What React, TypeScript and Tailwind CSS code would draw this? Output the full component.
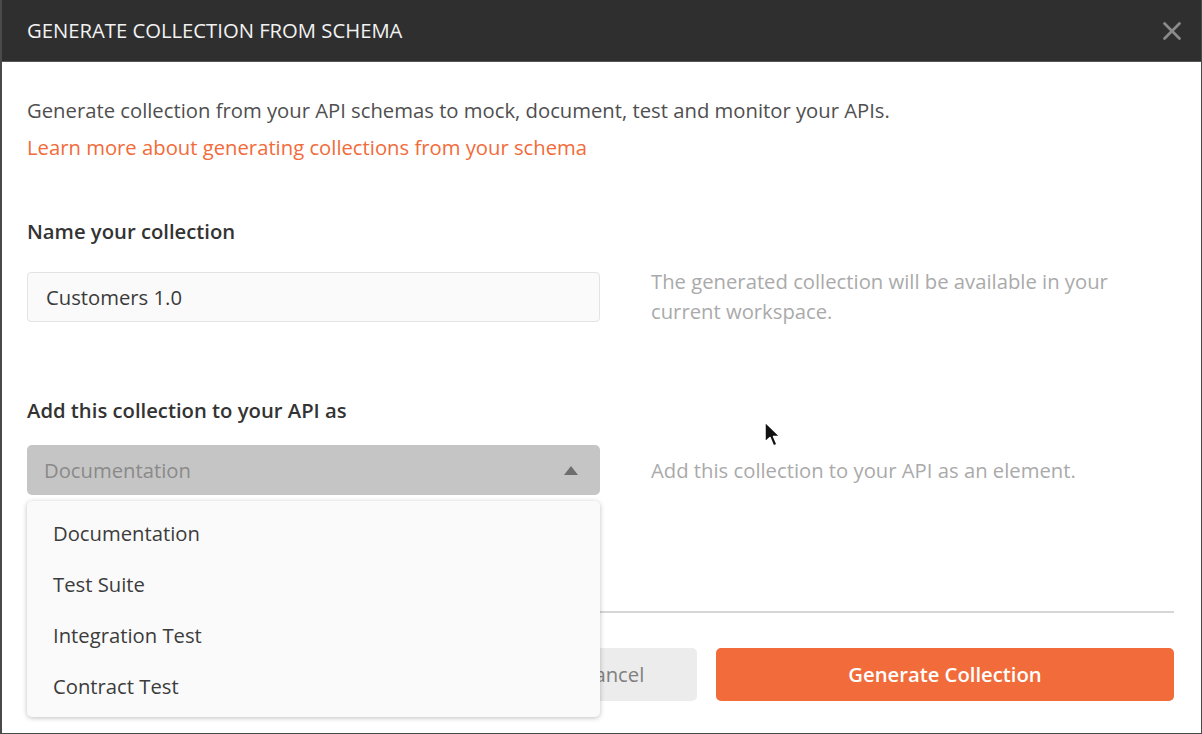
import { X } from "lucide-react";

const items = ["Documentation", "Test Suite", "Integration Test", "Contract Test"];

export default function App() {
  return (
    <div
      className="relative h-[734px] w-[1202px] overflow-hidden border-b border-l-2 border-r border-[#4a4a4a] bg-white"
      style={{ fontFamily: '"Open Sans", "Liberation Sans", sans-serif' }}
    >
      {/* header */}
      <div className="flex h-[62px] items-center justify-between border-b border-[#555] bg-[#2f2f2f] pl-[25px] pr-[14px]">
        <h1 className="text-[20.25px] text-[#f2f2f2]">GENERATE COLLECTION FROM SCHEMA</h1>
        <X className="h-[30px] w-[30px] text-[#8b8b8b]" strokeWidth={2.2} />
      </div>

      <div className="pl-[25px] pr-[27px] pt-[30px]">
        <p className="text-[20.25px] leading-[37px] text-[#4f4f4f]">
          Generate collection from your API schemas to mock, document, test and monitor your APIs.
        </p>
        <a className="block text-[20.25px] leading-[37px] text-[#f26b3a]">
          Learn more about generating collections from your schema
        </a>

        <h2 className="mt-[52px] text-[20.25px] font-semibold leading-[26px] text-[#333]">Name your collection</h2>
        <div className="mt-[28px] flex">
          <div className="flex h-[50px] w-[573px] items-center rounded-[4px] border border-[#e3e3e3] bg-[#fafafa] px-[18px] text-[20.25px] text-[#3a3a3a]">
            Customers 1.0
          </div>
          <p className="-mt-[6px] ml-[51px] w-[470px] text-[20.25px] leading-[30px] text-[#aaaaaa]">
            The generated collection will be available in your current workspace.
          </p>
        </div>

        <h2 className="mt-[71px] text-[20.25px] font-semibold leading-[26px] text-[#333]">Add this collection to your API as</h2>
        <div className="relative mt-[22px] flex">
          <div className="flex h-[50px] w-[573px] items-center justify-between rounded-[5px] bg-[#c5c5c5] pl-[17px] pr-[22px] text-[20.25px] text-[#8a8a8a]">
            <span>Documentation</span>
            <svg width="14" height="9" viewBox="0 0 14 9">
              <path d="M7 0 L14 9 L0 9 Z" fill="#6e6e6e" />
            </svg>
          </div>
          <p className="ml-[51px] self-center text-[20.25px] text-[#aaaaaa]">Add this collection to your API as an element.</p>

          {/* open menu */}
          <ul className="absolute left-0 top-[56px] z-10 w-[573px] rounded-[5px] bg-[#fafafa] pb-[5px] pt-[7px] shadow-[0_1px_5px_rgba(0,0,0,0.25)]">
            {items.map((it) => (
              <li key={it} className="flex h-[51px] items-center px-[26px] text-[20.25px] text-[#3c3c3c]">
                {it}
              </li>
            ))}
          </ul>
        </div>

        <div className="mt-[116px] border-t-2 border-[#d6d6d6]" />
        <div className="mt-[35px] flex justify-end gap-[19px]">
          <button className="h-[53px] w-[168px] rounded-[5px] bg-[#ececec] text-[20.25px] text-[#808080]">Cancel</button>
          <button className="h-[53px] w-[458px] rounded-[5px] bg-[#f26b3a] text-[20.25px] font-semibold text-white">
            Generate Collection
          </button>
        </div>
      </div>

      {/* mouse pointer */}
      <svg className="absolute left-[760px] top-[420px]" width="22" height="30" viewBox="0 0 22 30">
        <path
          d="M3 2 L3 22 L8 17.5 L11.5 26 L15 24.5 L11.5 16.5 L18 16.5 Z"
          fill="#111"
          stroke="#fff"
          strokeWidth="1.5"
          strokeLinejoin="round"
        />
      </svg>
    </div>
  );
}
